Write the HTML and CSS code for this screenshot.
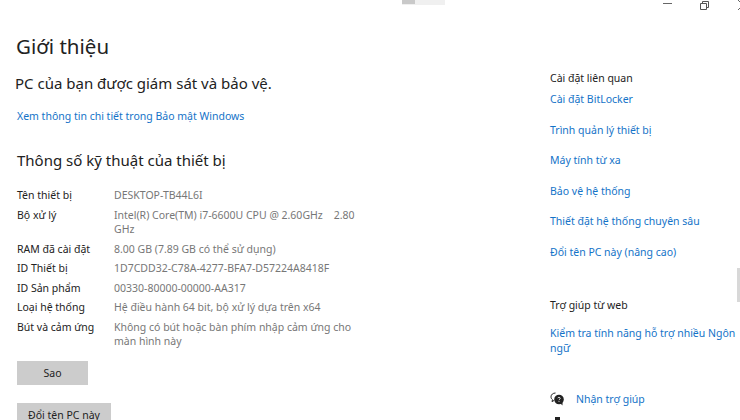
FILE: index.html
```html
<!DOCTYPE html>
<html lang="vi">
<head>
  <meta charset="UTF-8">
  <meta name="viewport" content="width=device-width, initial-scale=1.0">
  <link rel="stylesheet" href="styles.css">
</head>
<body>
  <!-- thanh tiêu đề -->
  <div class="titlebar">
    <div class="title-stub"><span class="stub-mark"></span></div>
    <div class="window-controls">
      <svg class="win-icon" width="12" height="12" viewBox="0 0 12 12"><path d="M1 3.5h9" stroke="#666" fill="none"/></svg>
      <svg class="win-icon" width="12" height="12" viewBox="0 0 12 12"><path d="M1.5 3.5h6v6h-6zM3.5 3.5v-2h6v6h-2" stroke="#555" fill="none"/></svg>
      <svg class="win-icon" width="12" height="12" viewBox="0 0 12 12"><path d="M2 0l5 5-5 5" stroke="#666" fill="none"/></svg>
    </div>
  </div>

  <div class="page">
    <!-- nội dung chính -->
    <div class="main-content">
      <h1>Giới thiệu</h1>
      <p class="protect">PC của bạn được giám sát và bảo vệ.</p>
      <a class="link security-link" href="#">Xem thông tin chi tiết trong Bảo mật Windows</a>
      <h2>Thông số kỹ thuật của thiết bị</h2>
      <dl class="specs">
        <dt>Tên thiết bị</dt><dd>DESKTOP-TB44L6I</dd>
        <dt>Bộ xử lý</dt><dd>Intel(R) Core(TM) i7-6600U CPU @ 2.60GHz&nbsp;&nbsp;&nbsp; 2.80 GHz</dd>
        <dt>RAM đã cài đặt</dt><dd>8.00 GB (7.89 GB có thể sử dụng)</dd>
        <dt>ID Thiết bị</dt><dd>1D7CDD32-C78A-4277-BFA7-D57224A8418F</dd>
        <dt>ID Sản phẩm</dt><dd>00330-80000-00000-AA317</dd>
        <dt>Loại hệ thống</dt><dd>Hệ điều hành 64 bit, bộ xử lý dựa trên x64</dd>
        <dt>Bút và cảm ứng</dt><dd>Không có bút hoặc bàn phím nhập cảm ứng cho màn hình này</dd>
      </dl>
      <button class="btn btn-copy">Sao</button>
      <button class="btn btn-rename">Đổi tên PC này</button>
    </div>

    <!-- cột bên phải -->
    <div class="side">
      <h3>Cài đặt liên quan</h3>
      <ul class="side-links">
        <li><a class="link" href="#">Cài đặt BitLocker</a></li>
        <li><a class="link" href="#">Trình quản lý thiết bị</a></li>
        <li><a class="link" href="#">Máy tính từ xa</a></li>
        <li><a class="link" href="#">Bảo vệ hệ thống</a></li>
        <li><a class="link" href="#">Thiết đặt hệ thống chuyên sâu</a></li>
        <li><a class="link" href="#">Đổi tên PC này (nâng cao)</a></li>
      </ul>
      <h3 class="web-help">Trợ giúp từ web</h3>
      <a class="link lang-link" href="#">Kiểm tra tính năng hỗ trợ nhiều Ngôn ngữ</a>
      <div class="help-row">
        <svg width="15" height="15" viewBox="0 0 15 15">
          <path d="M5.5 1C3 1 1 2.6 1 4.8c0 1.2.6 2.2 1.5 2.9L2 9.6l2.2-1.2" stroke="#222" fill="none"/>
          <circle cx="9" cy="7.5" r="4.8" fill="#222"/>
          <path d="M10.5 11.5l2 2v-3z" fill="#222"/>
          <path d="M7.8 6.2c.2-1.2 2.4-1.2 2.4.2 0 .9-1.2.9-1.2 1.8M9 9.2v.8" stroke="#fff" stroke-width=".9" fill="none"/>
        </svg>
        <a class="link" href="#">Nhận trợ giúp</a>
      </div>
      <div class="help-row feedback-row">
        <svg width="15" height="15" viewBox="0 0 15 15"><path d="M5 0h5v5l-1.5 3h-2L5 5z" fill="#222"/></svg>
      </div>
    </div>

    <div class="scrollbar"></div>
  </div>
</body>
</html>
```

FILE: styles.css
```css
* {
  margin: 0;
  padding: 0;
  box-sizing: border-box;
}

html, body {
  height: 420px;
  overflow: hidden;
}

body {
  width: 740px;
  background: white;
  color: #222;
  font-family: "Noto Sans", "Open Sans", sans-serif;
  font-size: 10.5px;
}

/* thanh tiêu đề */
.titlebar {
  display: flex;
  justify-content: space-between;
  height: 30px;
  padding-left: 402px;
}

.title-stub {
  width: 43px;
  height: 5px;
  background: #f0f0f0;
}

.stub-mark {
  display: block;
  width: 13px;
  height: 4px;
  background: #c9c9c9;
}

.window-controls {
  display: flex;
  gap: 25px;
  margin-right: -8px;
  height: 12px;
}

.win-icon {
  display: block;
}

.page {
  position: relative;
  display: flex;
}

.main-content {
  width: 550px;
  padding-left: 17px;
}

h1 {
  font-size: 20.5px;
  font-weight: 400;
  line-height: 28px;
  margin-top: 2px;
  margin-left: -1px;
}

.protect {
  font-size: 15px;
  line-height: 22px;
  margin-top: 12px;
  margin-left: -2px;
}

.link {
  color: #1473c8;
  text-decoration: none;
}

.security-link {
  display: block;
  line-height: 16px;
  margin-top: 14px;
}

h2 {
  font-size: 15px;
  font-weight: 400;
  line-height: 24px;
  margin-top: 24px;
}

.specs {
  display: grid;
  grid-template-columns: 97px 245px;
  row-gap: 5px;
  margin-top: 16px;
  line-height: 14.5px;
}

dd {
  color: #777;
}

.btn {
  display: block;
  border: none;
  background: #ccc;
  color: #222;
  font: inherit;
  height: 24px;
}

.btn-copy {
  width: 71px;
  margin-top: 12px;
}

.btn-rename {
  width: 94px;
  margin-top: 18px;
}

/* cột bên phải */
.side {
  width: 190px;
  padding-top: 41px;
  line-height: 15px;
}

h3 {
  font-size: 10.5px;
  font-weight: 400;
}

.side-links {
  list-style: none;
  display: flex;
  flex-direction: column;
  gap: 15.6px;
  margin-top: 6px;
}

.web-help {
  margin-top: 38px;
}

.lang-link {
  display: block;
  margin-top: 13px;
}

.help-row {
  display: flex;
  align-items: center;
  gap: 11px;
  margin-top: 36px;
}

.feedback-row {
  margin-top: 10px;
}

.scrollbar {
  position: absolute;
  right: 0;
  top: 238px;
  width: 3px;
  height: 34px;
  background: #d8d8d8;
}
```
